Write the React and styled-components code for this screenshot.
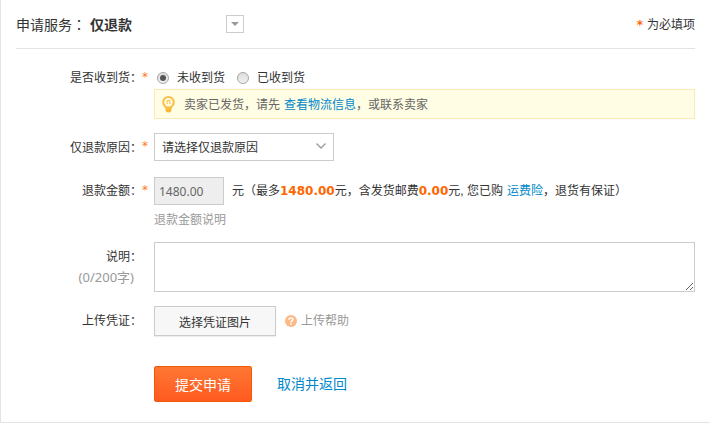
import React, { useState } from 'react';
import styled, { createGlobalStyle } from 'styled-components';

// --- Global Styles ---
const GlobalStyle = createGlobalStyle`
  * {
    box-sizing: border-box;
  }

  body {
    margin: 0;
    background: #fff;
    color: #333;
    font-family: 'Liberation Sans', 'Noto Sans CJK SC', sans-serif;
    font-size: 12px;
    line-height: 20px;
  }

  button, input, select, textarea {
    margin: 0;
    font-family: inherit;
    font-size: inherit;
    color: inherit;
  }
`;

// --- Styled Components ---

const Panel = styled.main`
  padding: 0 15px 20px;
  border-left: 1px solid #e3e3e3;
  border-bottom: 1px solid #e3e3e3;
`;

const Header = styled.header`
  display: flex;
  align-items: center;
  height: 49px;
  border-bottom: 1px solid #e3e3e3;
`;

const Service = styled.h1`
  width: 210px;
  margin: 0;
  font-size: 14px;
  font-weight: 400;
`;

const ServiceColon = styled.span`
  font-family: 'Noto Sans CJK TC', sans-serif;
`;

const ServiceName = styled.strong`
  margin-left: 4px;
  font-weight: 700;
`;

const Toggle = styled.button`
  display: flex;
  align-items: center;
  justify-content: center;
  width: 18px;
  height: 18px;
  padding: 0;
  background: #fff;
  border: 1px solid #ccc;
  cursor: pointer;
`;

const RequiredNote = styled.span`
  margin-left: auto;
  line-height: 22px;
  padding-top: 2px;
`;

const Star = styled.span`
  color: ${(props) => (props.$bold ? '#ff6600' : '#ff7722')};
  font-family: 'DejaVu Sans', sans-serif;
  font-weight: ${(props) => (props.$bold ? 700 : 400)};
  margin-right: ${(props) => (props.$bold ? '4px' : '0')};
`;

const Form = styled.form`
  padding-top: 18px;
`;

const Row = styled.div`
  display: grid;
  grid-template-columns: 126px 12px 1fr;
  margin-bottom: ${(props) => props.$gap || 14}px;
`;

const Label = styled.div`
  text-align: right;
  line-height: ${(props) => props.$line || 28}px;
`;

const StarCell = styled.div`
  line-height: ${(props) => props.$line || 26}px;
`;

const Field = styled.div`
  grid-column: 3;
  min-width: 0;
`;

const Inline = styled.div`
  display: flex;
  align-items: center;
`;

const RadioLabel = styled.label`
  display: flex;
  align-items: center;
  height: 22px;
  padding-left: 3px;
  margin-right: 9px;
`;

const Radio = styled.input`
  appearance: none;
  display: grid;
  place-items: center;
  width: 12px;
  height: 12px;
  margin-right: 8px;
  border: 1px solid #a6a6a6;
  border-radius: 50%;
  background: linear-gradient(#dedede, #f0f0f0);

  &:checked::before {
    content: '';
    width: 6px;
    height: 6px;
    border-radius: 50%;
    background: #555;
  }
`;

const Notice = styled.div`
  display: flex;
  align-items: center;
  height: 30px;
  padding-left: 7px;
  border: 1px solid #fbe9b8;
  background: #fffde3;
  color: #666;
  line-height: 22px;

  span {
    padding-top: 2px;
  }

  svg {
    margin-right: 9px;
  }
`;

const Link = styled.a`
  margin-left: 4px;
  color: #0088cc;
  text-decoration: none;
`;

const SelectBox = styled.div`
  position: relative;
  width: 180px;

  svg {
    position: absolute;
    right: 8px;
    top: 9px;
    pointer-events: none;
  }
`;

const Select = styled.select`
  appearance: none;
  display: block;
  width: 100%;
  height: 28px;
  padding: 2px 24px 0 7px;
  border: 1px solid #ccc;
  border-radius: 0;
  background: #fff;
`;

const AmountInput = styled.input`
  width: 70px;
  height: 28px;
  padding: 0 4px;
  margin-right: 8px;
  border: 1px solid #ccc;
  background: #eee;
  color: #666;
  font-family: 'Noto Sans', sans-serif;
`;

const Price = styled.b`
  color: #ff6600;
  font-family: 'DejaVu Sans', sans-serif;
`;

const Hint = styled.p`
  margin: 5px 0 0;
  color: #999;
`;

const Counter = styled.div`
  color: #999;
  font-family: 'Noto Sans', 'Noto Sans CJK SC', sans-serif;
  font-size: 13px;
  line-height: 10px;
  padding-right: 8px;
`;

const Textarea = styled.textarea`
  display: block;
  width: 100%;
  height: 50px;
  padding: 5px;
  border: 1px solid #ccc;
  resize: vertical;
`;

const UploadButton = styled.button`
  width: 122px;
  height: 30px;
  padding: 0;
  border: 1px solid #ccc;
  background: #f7f7f7;
  box-shadow: 0 1px 1px #eee;
  cursor: pointer;
`;

const HelpLink = styled.a`
  display: flex;
  align-items: center;
  gap: 4px;
  margin-left: 9px;
  color: #999;
  text-decoration: none;
`;

const Actions = styled.div`
  display: flex;
  align-items: center;
  gap: 25px;
  margin-top: 30px;
  padding-left: 138px;
  font-size: 14px;
`;

const SubmitButton = styled.button`
  width: 98px;
  height: 36px;
  padding: 0;
  border: 1px solid #f25a05;
  border-radius: 2px;
  background: linear-gradient(#ff7733, #ff5a1f);
  color: #fff;
  cursor: pointer;
`;

const CancelLink = styled(Link)`
  margin-left: 0;
`;

// --- Icons ---

const CaretIcon = () => (
  <svg width="8" height="4" viewBox="0 0 8 4" aria-hidden="true">
    <path d="M0 0h8L4 4z" fill="#999" />
  </svg>
);

const ChevronIcon = () => (
  <svg width="10" height="8" viewBox="0 0 10 8" aria-hidden="true">
    <path d="M0.5 1.5L5 6l4.5-4.5" fill="none" stroke="#999" strokeWidth="1.3" />
  </svg>
);

const BulbIcon = () => (
  <svg width="13" height="17" viewBox="0 0 13 17" aria-hidden="true">
    <path
      d="M6.5 0A6.3 6.3 0 0 0 .2 6.3c0 2.4 1.4 3.7 2.4 4.9.5.6.7 1 .8 1.8h6.2c.1-.8.3-1.2.8-1.8 1-1.2 2.4-2.5 2.4-4.9A6.3 6.3 0 0 0 6.5 0z"
      fill="#fbc04a"
    />
    <circle cx="6.5" cy="6.2" r="4.2" fill="#fffbe0" />
    <path d="M5.2 8V4.5h2.6V8" fill="none" stroke="#fbc04a" strokeWidth="1" />
    <path d="M3.6 12.5h5.8v2c0 1.2-1.1 2-2.9 2s-2.900-.8-2.900-2z" fill="#f9b83c" />
  </svg>
);

const HelpIcon = () => (
  <svg width="12" height="12" viewBox="0 0 12 12" aria-hidden="true">
    <circle cx="6" cy="6" r="6" fill="#fbb987" />
    <path d="M4 4.7C4 2.3 8 2.3 8 4.6 8 5.9 6 5.9 6 7.4" fill="none" stroke="#fff" strokeWidth="1.5" />
    <path d="M5.2 8.3h1.600v1.500H5.200z" fill="#fff" />
  </svg>
);

// --- Main Component ---
export default function App() {
  const [received, setReceived] = useState('no');
  const [remark, setRemark] = useState('');

  return (
    <>
      <GlobalStyle />
      <Panel>
        <Header>
          <Service>
            申请服务<ServiceColon>：</ServiceColon>
            <ServiceName>仅退款</ServiceName>
          </Service>
          <Toggle type="button" aria-label="申请服务">
            <CaretIcon />
          </Toggle>
          <RequiredNote>
            <Star $bold>*</Star>为必填项
          </RequiredNote>
        </Header>

        <Form onSubmit={(e) => e.preventDefault()}>
          <Row role="radiogroup" aria-labelledby="received-label">
            <Label $line={22} id="received-label">是否收到货：</Label>
            <StarCell $line={20}><Star>*</Star></StarCell>
            <Field>
              <Inline>
                <RadioLabel>
                  <Radio type="radio" name="received" checked={received === 'no'} onChange={() => setReceived('no')} />
                  未收到货
                </RadioLabel>
                <RadioLabel>
                  <Radio type="radio" name="received" checked={received === 'yes'} onChange={() => setReceived('yes')} />
                  已收到货
                </RadioLabel>
              </Inline>
              <Notice>
                <BulbIcon />
                <span>卖家已发货，请先<Link href="#logistics">查看物流信息</Link>，或联系卖家</span>
              </Notice>
            </Field>
          </Row>

          <Row $gap={14}>
            <Label as="label" $line={30} htmlFor="reason">仅退款原因：</Label>
            <StarCell><Star>*</Star></StarCell>
            <Field>
              <SelectBox>
                <Select id="reason">
                  <option>请选择仅退款原因</option>
                </Select>
                <ChevronIcon />
              </SelectBox>
            </Field>
          </Row>

          <Row $gap={12}>
            <Label as="label" htmlFor="amount">退款金额：</Label>
            <StarCell><Star>*</Star></StarCell>
            <Field>
              <Inline>
                <AmountInput id="amount" value="1480.00" readOnly />
                <span>
                  元（最多<Price>1480.00</Price>元，含发货邮费<Price>0.00</Price>元, 您已购
                  <Link href="#insurance">运费险</Link>，退货有保证）
                </span>
              </Inline>
              <Hint>退款金额说明</Hint>
            </Field>
          </Row>

          <Row>
            <Label $line={30}>
              <label htmlFor="remark">说明：</label>
              <Counter>({remark.length}/200字)</Counter>
            </Label>
            <Field>
              <Textarea id="remark" maxLength={200} value={remark} onChange={(e) => setRemark(e.target.value)} />
            </Field>
          </Row>

          <Row>
            <Label $line={30} id="upload-label">上传凭证：</Label>
            <Field>
              <Inline>
                <UploadButton type="button" aria-describedby="upload-label">选择凭证图片</UploadButton>
                <HelpLink href="#help">
                  <HelpIcon />
                  上传帮助
                </HelpLink>
              </Inline>
            </Field>
          </Row>

          <Actions>
            <SubmitButton type="submit">
              提交申请
            </SubmitButton>
            <CancelLink href="#back">取消并返回</CancelLink>
          </Actions>
        </Form>
      </Panel>
    </>
  );
}
